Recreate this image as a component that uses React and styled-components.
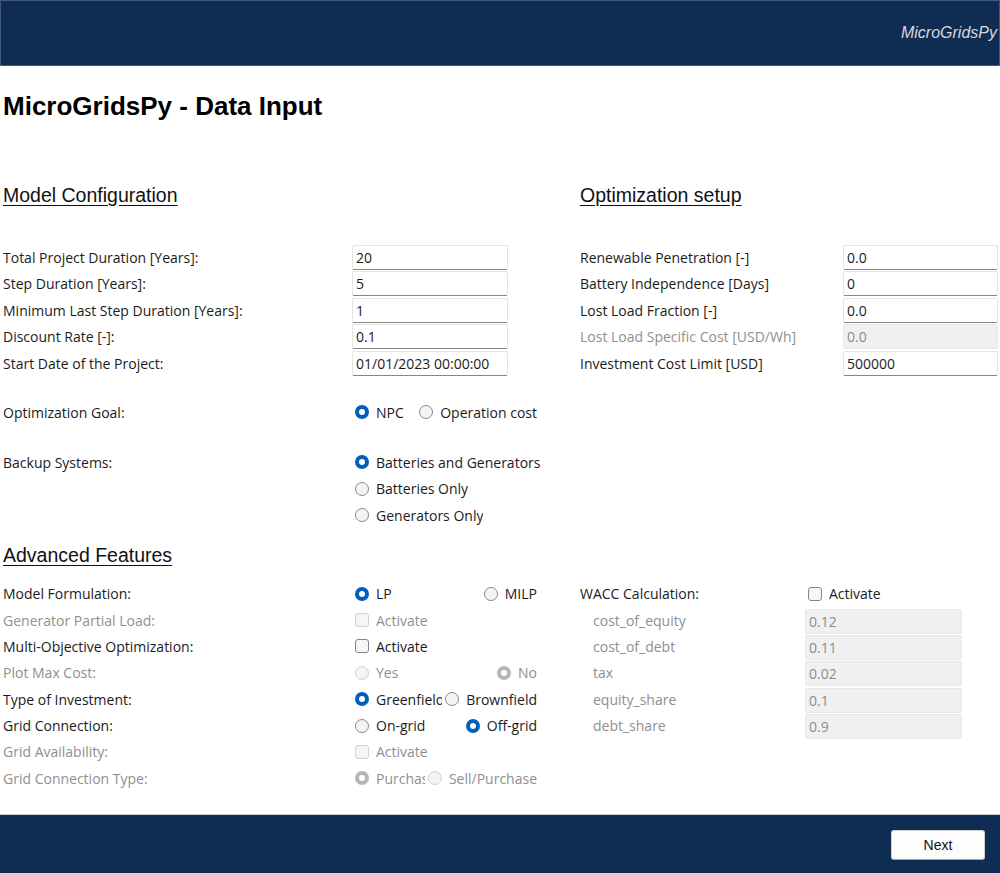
import styled, { createGlobalStyle } from 'styled-components'

const GlobalStyle = createGlobalStyle`
  html, body {
    margin: 0;
    padding: 0;
    background: #ffffff;
  }
  body {
    font-family: "Open Sans", "Noto Sans", sans-serif;
    font-size: 14px;
    color: #1b1b1b;
  }
`

const Page = styled.div`
  width: 1000px;
  height: 873px;
  display: flex;
  flex-direction: column;
  overflow: hidden;
`

const TopBar = styled.header`
  flex-shrink: 0;
  height: 66px;
  box-sizing: border-box;
  background: #0f2d52;
  border: 1px solid #44597a;
  display: flex;
  align-items: center;
  justify-content: flex-end;
  padding: 0 2px 0 0;
`

const Brand = styled.span`
  font-family: "Liberation Sans", Arial, sans-serif;
  font-style: italic;
  font-size: 16px;
  color: #d4d8de;
`

const Main = styled.main`
  flex: 1;
  padding: 0 2px 0 3px;
`

const Title = styled.h1`
  margin: 25px 0 0;
  font-family: "Liberation Sans", Arial, sans-serif;
  font-size: 26px;
  line-height: 30px;
  font-weight: bold;
  color: #000;
`

const Band = styled.div`
  display: grid;
  grid-template-columns: 534px 418px;
  column-gap: 43px;
  margin-top: ${(p) => p.$top}px;
`

const SectionTitle = styled.h2`
  margin: 0 0 ${(p) => p.$gap}px;
  font-family: "Liberation Sans", Arial, sans-serif;
  font-size: 19.5px;
  line-height: 24px;
  font-weight: normal;
  text-decoration: underline;
  text-underline-offset: 3px;
  color: #111;
`

const HeaderSpacer = styled.div`
  height: ${(p) => p.$h}px;
`

const Row = styled.div`
  display: grid;
  grid-template-columns: ${(p) => p.$cols};
  height: 26.4px;
  align-items: start;
  margin-top: ${(p) => p.$top || 0}px;
`

const Label = styled.span`
  line-height: 25px;
  white-space: nowrap;
  padding-left: ${(p) => p.$indent || 0}px;
  color: ${(p) => (p.$disabled ? '#8f8f8f' : '#1b1b1b')};
`

const Input = styled.input`
  box-sizing: border-box;
  width: ${(p) => p.$w || '100%'};
  height: 25px;
  margin: ${(p) => (p.$soft ? '1px 0 0' : '0')};
  padding: 0 3px;
  font: inherit;
  font-size: 14px;
  color: ${(p) => (p.disabled ? '#8c8c8c' : '#1b1b1b')};
  background: ${(p) => (p.disabled ? '#f0f0f0' : '#ffffff')};
  border: 1px solid ${(p) => (p.disabled ? '#e8e8e8' : '#e4e4e4')};
  border-bottom-color: ${(p) => (p.disabled ? '#e8e8e8' : '#868686')};
  border-radius: 2px;
  outline: none;
`

const Options = styled.div`
  display: flex;
  justify-content: ${(p) => (p.$spread ? 'space-between' : 'flex-start')};
  align-items: center;
  height: 25px;
  min-width: 0;
`

const Option = styled.label`
  display: flex;
  align-items: center;
  gap: 7px;
  min-width: 0;
  flex: ${(p) => (p.$clip ? '0 1 auto' : '0 0 auto')};
  overflow: hidden;
  white-space: nowrap;
  padding-left: 3px;
  color: ${(p) => (p.$disabled ? '#8f8f8f' : '#1b1b1b')};
`

const OptionText = styled.span`
  overflow: hidden;
  text-overflow: clip;
  min-width: 0;
`

const RadioDot = styled.span`
  flex-shrink: 0;
  box-sizing: border-box;
  width: 14px;
  height: 14px;
  border-radius: 50%;
  background: ${(p) => (p.$on ? (p.$disabled ? '#b5b5b5' : '#005fb8') : '#f4f4f4')};
  border: ${(p) =>
    p.$on ? '4px solid transparent' : `1px solid ${p.$disabled ? '#d2d2d2' : '#8a8a8a'}`};
  position: relative;

  &::after {
    content: '';
    display: ${(p) => (p.$on ? 'block' : 'none')};
    position: absolute;
    inset: 0;
    border-radius: 50%;
    background: #ffffff;
  }
`

const CheckBox = styled.span`
  flex-shrink: 0;
  box-sizing: border-box;
  width: 14px;
  height: 14px;
  border-radius: 3px;
  background: #f6f6f6;
  border: 1px solid ${(p) => (p.$disabled ? '#d2d2d2' : '#858585')};
`

const Footer = styled.footer`
  flex-shrink: 0;
  height: 59px;
  box-sizing: border-box;
  background: #0f2d52;
  border-top: 1px solid #c9cdd3;
  display: flex;
  align-items: center;
  justify-content: flex-end;
  padding: 2px 15px 0 0;
`

const NextButton = styled.button`
  width: 94px;
  height: 30px;
  background: #fdfdfd;
  border: 1px solid #d0d0d0;
  border-bottom-color: #a8a8a8;
  border-radius: 3px;
  font-family: "Liberation Sans", Arial, sans-serif;
  font-size: 14px;
  color: #111;
  cursor: pointer;
`

const Radio = ({ label, on, disabled, clip }) => (
  <Option $disabled={disabled} $clip={clip}>
    <RadioDot $on={on} $disabled={disabled} />
    <OptionText>{label}</OptionText>
  </Option>
)

const Check = ({ label, disabled }) => (
  <Options>
    <Option $disabled={disabled}>
      <CheckBox $disabled={disabled} />
      <OptionText>{label}</OptionText>
    </Option>
  </Options>
)

const Pair = ({ a, b, aOn, bOn, disabled }) => (
  <Options $spread>
    <Radio label={a} on={aOn} disabled={disabled} clip />
    <Radio label={b} on={bOn} disabled={disabled} />
  </Options>
)

const LEFT = '349px 185px'
const RIGHT = '263px 155px'
const WACC = '225px 157px'

const modelFields = [
  ['Total Project Duration [Years]:', '20'],
  ['Step Duration [Years]:', '5'],
  ['Minimum Last Step Duration [Years]:', '1'],
  ['Discount Rate [-]:', '0.1'],
  ['Start Date of the Project:', '01/01/2023 00:00:00'],
]

const optimizationFields = [
  ['Renewable Penetration [-]', '0.0'],
  ['Battery Independence [Days]', '0'],
  ['Lost Load Fraction [-]', '0.0'],
  ['Lost Load Specific Cost [USD/Wh]', '0.0', true],
  ['Investment Cost Limit [USD]', '500000'],
]

const waccFields = [
  ['cost_of_equity', '0.12'],
  ['cost_of_debt', '0.11'],
  ['tax', '0.02'],
  ['equity_share', '0.1'],
  ['debt_share', '0.9'],
]

export default function App() {
  return (
    <Page>
      <GlobalStyle />
      <TopBar>
        <Brand>MicroGridsPy</Brand>
      </TopBar>

      <Main>
        <Title>MicroGridsPy - Data Input</Title>

        <Band $top={62}>
          <div>
            <SectionTitle $gap={38}>Model Configuration</SectionTitle>
            {modelFields.map(([label, value]) => (
              <Row key={label} $cols={LEFT}>
                <Label>{label}</Label>
                <Input defaultValue={value} $w="156px" />
              </Row>
            ))}

            <Row $cols={LEFT} $top={23}>
              <Label>Optimization Goal:</Label>
              <Pair a="NPC" b="Operation cost" aOn />
            </Row>

            <Row $cols={LEFT} $top={23.6}>
              <Label>Backup Systems:</Label>
              <Options>
                <Radio label="Batteries and Generators" on />
              </Options>
            </Row>
            <Row $cols={LEFT}>
              <span />
              <Options>
                <Radio label="Batteries Only" />
              </Options>
            </Row>
            <Row $cols={LEFT}>
              <span />
              <Options>
                <Radio label="Generators Only" />
              </Options>
            </Row>
          </div>

          <div>
            <SectionTitle $gap={38}>Optimization setup</SectionTitle>
            {optimizationFields.map(([label, value, disabled]) => (
              <Row key={label} $cols={RIGHT}>
                <Label $disabled={disabled}>{label}</Label>
                <Input defaultValue={value} disabled={disabled} />
              </Row>
            ))}
          </div>
        </Band>

        <Band $top={14}>
          <div>
            <SectionTitle $gap={14}>Advanced Features</SectionTitle>
            <Row $cols={LEFT}>
              <Label>Model Formulation:</Label>
              <Pair a="LP" b="MILP" aOn />
            </Row>
            <Row $cols={LEFT}>
              <Label $disabled>Generator Partial Load:</Label>
              <Check label="Activate" disabled />
            </Row>
            <Row $cols={LEFT}>
              <Label>Multi-Objective Optimization:</Label>
              <Check label="Activate" />
            </Row>
            <Row $cols={LEFT}>
              <Label $disabled>Plot Max Cost:</Label>
              <Pair a="Yes" b="No" bOn disabled />
            </Row>
            <Row $cols={LEFT}>
              <Label>Type of Investment:</Label>
              <Pair a="Greenfield" b="Brownfield" aOn />
            </Row>
            <Row $cols={LEFT}>
              <Label>Grid Connection:</Label>
              <Pair a="On-grid" b="Off-grid" bOn />
            </Row>
            <Row $cols={LEFT}>
              <Label $disabled>Grid Availability:</Label>
              <Check label="Activate" disabled />
            </Row>
            <Row $cols={LEFT}>
              <Label $disabled>Grid Connection Type:</Label>
              <Pair a="Purchase" b="Sell/Purchase" aOn disabled />
            </Row>
          </div>

          <div>
            <HeaderSpacer $h={38} />
            <Row $cols={WACC}>
              <Label>WACC Calculation:</Label>
              <Check label="Activate" />
            </Row>
            {waccFields.map(([label, value]) => (
              <Row key={label} $cols={WACC}>
                <Label $indent={13} $disabled>
                  {label}
                </Label>
                <Input defaultValue={value} disabled $soft />
              </Row>
            ))}
          </div>
        </Band>
      </Main>

      <Footer>
        <NextButton>Next</NextButton>
      </Footer>
    </Page>
  )
}
